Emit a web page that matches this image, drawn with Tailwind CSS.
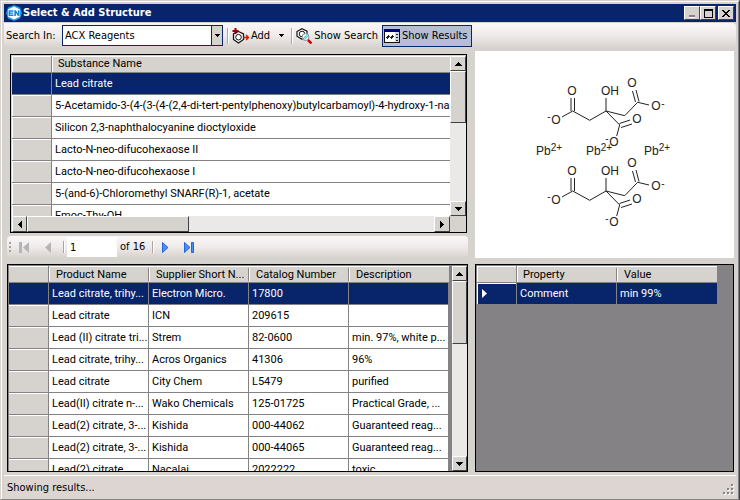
<!DOCTYPE html>
<html lang="en">
<head>
<meta charset="utf-8">
<title>Select &amp; Add Structure</title>
<script src="https://cdn.jsdelivr.net/npm/@tailwindcss/browser@4"></script>
</head>
<body class="h-screen overflow-hidden bg-[#d6d3ce] text-black text-[11px] leading-4 font-['DejaVu_Sans_Condensed',Tahoma,sans-serif]">
<svg class="hidden">
  <symbol id="up" viewBox="0 0 7 4" shape-rendering="crispEdges"><path d="M3 0h1v1h1v1h1v1h1v1H0V3h1V2h1V1h1z"/></symbol>
  <symbol id="down" viewBox="0 0 7 4" shape-rendering="crispEdges"><path d="M0 0h7v1H6v1H5v1H4v1H3V3H2V2H1V1H0z"/></symbol>
  <symbol id="left" viewBox="0 0 4 7" shape-rendering="crispEdges"><path d="M4 0v7H3V6H2V5H1V4H0V3h1V2h1V1h1V0z"/></symbol>
  <symbol id="right" viewBox="0 0 4 7" shape-rendering="crispEdges"><path d="M0 0v7h1V6h1V5h1V4h1V3H3V2H2V1H1V0z"/></symbol>
  <symbol id="citrate" viewBox="0 -12 130 88">
    <g fill="none" stroke="#222" stroke-width="1">
      <path d="M21 30L31.700 24M30 24V11M33.500 24V11M31.700 24L48.700 33.300L65 24V11M65 24L83.700 28.700L96.700 15.300M94.500 15L91.500 4M98 14.500L95 3M96.700 15.300L108 18M65 24L78.700 38M78.500 36.500L89 33M80 40.500L91 37M78.700 38L75.700 49"/>
    </g>
    <g fill="#222" font-family="Liberation Sans, Arial, sans-serif" font-size="12" text-anchor="middle">
      <text x="31" y="8">O</text><text x="15" y="37">O</text><text x="8" y="33" font-size="10">-</text>
      <text x="69" y="8">OH</text><text x="91" y="0">O</text><text x="115" y="23">O</text><text x="122" y="20" font-size="10">-</text>
      <text x="96" y="36">O</text><text x="73" y="59">O</text><text x="66" y="55" font-size="10">-</text>
    </g>
  </symbol>
</svg>
<div class="flex h-full flex-col border-t border-l border-[#d6d3ce] border-r border-b border-r-[#424142] border-b-[#848284]">
<div class="flex min-h-0 flex-1 flex-col border-t border-l border-r border-t-white border-l-white border-r-[#848284] pt-[2px] pl-[2px] pr-[2px]">

  <header class="flex h-[18px] shrink-0 items-center bg-[#08246b] pl-[2px] pr-[2px]">
    <svg width="16" height="16" viewBox="0 0 16 16" aria-hidden="true"><path d="M8 0l6 2.500L16 8l-2 5.500L8 16l-6-2.500L0 8l2-5.500z" fill="#1a9cf0"/><path d="M8 1.500l6 3v7L8 14.500 2 11.500V4.500z" fill="#fff"/><path d="M2.500 5.200h5v1.500h-3.300v.7h3v1.300h-3v.8h3.300V11h-5zM8.300 11V5.200h1.600l2 3V5.200h1.600V11h-1.600l-2-3v3z" fill="#1687dc"/></svg>
    <h1 class="flex-1 pl-px font-bold text-white">Select &amp; Add Structure</h1>
    <button aria-label="Minimize" class="flex h-[14px] w-4 justify-center border border-white border-r-[#424142] border-b-[#424142] bg-[#d6d3ce] pt-2"><span class="h-[3px] w-[6px] border-b border-white bg-[#848284]"></span></button>
    <button aria-label="Maximize" class="flex h-[14px] w-4 items-center justify-center border border-white border-r-[#424142] border-b-[#424142] bg-[#d6d3ce]"><span class="h-[9px] w-[9px] border border-t-2 border-black"></span></button>
    <button aria-label="Close" class="ml-[2px] flex h-[14px] w-4 items-center justify-center border border-white border-r-[#424142] border-b-[#424142] bg-[#d6d3ce]"><svg width="8" height="7" viewBox="0 0 8 7" shape-rendering="crispEdges"><path d="M0 0h2v1h1v1h2V1h1V0h2v1H7v1H6v1H5v1h1v1h1v1h1v1H6V6H5V5H3v1H2v1H0V6h1V5h1V4h1V3H2V2H1V1H0z"/></svg></button>
  </header>

  <nav class="mt-px flex h-[25px] shrink-0 items-center rounded-r-sm bg-linear-to-b from-[#fbf7f7] via-[#efebea] to-[#d8d2ce] pl-[2px]">
    <label for="source" class="w-14">Search In:</label>
    <div class="relative h-[21px] w-[161px]">
      <select id="source" class="h-full w-full appearance-none border border-[#08246b] bg-white pl-[2px] pr-4"><option>ACX Reagents</option></select>
      <span class="pointer-events-none absolute inset-y-px right-px flex w-[11px] items-center justify-center border-l border-[#08246b] bg-[#d6d3ce]"><svg width="5" height="3" viewBox="0 0 5 3" shape-rendering="crispEdges"><path d="M0 0h5v1H4v1H3v1H2V2H1V1H0z"/></svg></span>
    </div>
    <span class="mr-[3px] ml-1 h-4 w-[2px] border-l border-[#a6a6a6] bg-white"></span>
    <button class="flex h-[21px] items-center gap-[2px]">
      <svg width="17" height="16" viewBox="0 0 17 16"><path d="M6.500 3.500l5 2.500v5.500l-5 3.500-5-3.500V6z" fill="#fff" stroke="#111" stroke-width="1.300"/><circle cx="6.500" cy="9.200" r="2.800" fill="none" stroke="#111"/><path d="M3.500 0v6M.500 3h6" stroke="#9c0000" stroke-width="2"/><path d="M11 9.500h5M14 7l2.500 2.500L14 12" fill="none" stroke="#f00" stroke-width="1.300"/></svg>
      Add
    </button>
    <button aria-label="Add options" class="flex h-[21px] w-[21px] items-center justify-center pl-[2px]"><svg width="5" height="3" viewBox="0 0 5 3" shape-rendering="crispEdges"><path d="M0 0h5v1H4v1H3v1H2V2H1V1H0z"/></svg></button>
    <span class="mr-[3px] h-4 w-[2px] border-l border-[#a6a6a6] bg-white"></span>
    <button class="flex h-[21px] items-center gap-[2px]">
      <svg width="16" height="16" viewBox="0 0 16 16"><path d="M6 .7l5 2.500v5L6 11.200 1 8.200V3.500z" fill="#fff" stroke="#111" stroke-width="1.200"/><circle cx="6" cy="6" r="2.800" fill="none" stroke="#111"/><circle cx="9.500" cy="9" r="3.500" fill="#e8ffff" stroke="#8a8a8a"/><path d="M7 11l4-4.500M8.500 11.500l3.500-4" stroke="#00d5dc"/><path d="M12 12l3.500 3.500" stroke="#d00000" stroke-width="2.500"/></svg>
      Show Search
    </button>
    <button aria-pressed="true" class="ml-1 flex h-[22px] items-center gap-[2px] border border-[#08246b] bg-[#b5bed6] pl-px pr-[3px]">
      <svg width="16" height="14" viewBox="0 0 16 14" shape-rendering="crispEdges"><path fill="#111" d="M0 0h16v14H0z"/><path fill="#fff" d="M1 3h10v10H1z"/><path fill="#ced7e8" d="M11 3h4v10h-4z"/><path fill="#000084" d="M0 0h16v3H0z"/><path d="M2 8h1V7h1V6h1v1h1v1h1V7h1V6h1v1h1v1H9v1H8v1H7V9H6V8H5v1H4v1H3V9H2zM12 5h2v1h-2zM12 8h2v1h-2zM12 11h2v1h-2z" fill="#222"/></svg>
      Show Results
    </button>
  </nav>

  <main class="grid min-h-0 flex-1 grid-cols-[461fr_259fr] grid-rows-[210px_minmax(0,1fr)] gap-x-[7px] gap-y-[3px] pt-[3px] pr-[2px] pb-[3px] pl-[3px] font-[Roboto,'Liberation_Sans',Arial,sans-serif]">

    <section class="flex min-w-0 flex-col">
      <div class="mt-[3px] ml-[3px] mr-px grid h-[179px] grid-cols-[minmax(0,1fr)_16px] grid-rows-[minmax(0,1fr)_16px] border border-black bg-[#d6d3ce] pt-px pl-px">
        <div class="overflow-hidden bg-white">
          <table class="w-full table-fixed border-separate border-spacing-0 text-left whitespace-nowrap [&_td]:h-[22px] [&_td]:overflow-hidden [&_td]:border-b [&_td]:border-[#848284] [&_td]:p-0 [&_td]:pl-[3px] [&_th]:border-r [&_th]:border-b [&_th]:border-[#848284] [&_th]:bg-[#d6d3ce] [&_th]:p-0 [&_th]:font-normal [&_th]:shadow-[inset_1px_1px_0_#fff]">
            <thead><tr class="h-[17px]"><th class="w-10"></th><th class="border-r-0! pl-[6px]!">Substance Name</th></tr></thead>
            <tbody>
              <tr class="bg-[#08246b] text-white"><th class="bg-[#08246b]! shadow-none!"></th><td>Lead citrate</td></tr>
              <tr><th></th><td>5-Acetamido-3-(4-(3-(4-(2,4-di-tert-pentylphenoxy)butylcarbamoyl)-4-hydroxy-1-naphthyl</td></tr>
              <tr><th></th><td>Silicon 2,3-naphthalocyanine dioctyloxide</td></tr>
              <tr><th></th><td>Lacto-N-neo-difucohexaose II</td></tr>
              <tr><th></th><td>Lacto-N-neo-difucohexaose I</td></tr>
              <tr><th></th><td>5-(and-6)-Chloromethyl SNARF(R)-1, acetate</td></tr>
              <tr><th></th><td>Fmoc-Thy-OH</td></tr>
            </tbody>
          </table>
        </div>
        <div class="flex flex-col bg-[#ebe9e7]">
          <button aria-label="Scroll up" class="flex h-[15px] items-center justify-center border border-white border-r-[#424142] border-b-[#424142] bg-[#d6d3ce]"><svg width="7" height="4"><use href="#up"/></svg></button>
          <div class="h-[52px] border border-white border-r-[#424142] border-b-[#424142] bg-[#d6d3ce]"></div>
          <button aria-label="Scroll down" class="mt-auto flex h-[15px] items-center justify-center border border-white border-r-[#424142] border-b-[#424142] bg-[#d6d3ce]"><svg width="7" height="4"><use href="#down"/></svg></button>
        </div>
        <div class="flex bg-[#ebe9e7]">
          <button aria-label="Scroll left" class="flex w-[15px] items-center justify-center border border-white border-r-[#424142] border-b-[#424142] bg-[#d6d3ce]"><svg width="4" height="7"><use href="#left"/></svg></button>
          <div class="w-[162px] border border-white border-r-[#424142] border-b-[#424142] bg-[#d6d3ce]"></div>
          <button aria-label="Scroll right" class="ml-auto flex w-4 items-center justify-center border border-white border-r-[#424142] border-b-[#424142] bg-[#d6d3ce]"><svg width="4" height="7"><use href="#right"/></svg></button>
        </div>
      </div>
      <div class="mt-[3px] flex h-[22px] items-center rounded-sm bg-linear-to-b from-[#fbf7f7] via-[#efebea] to-[#d8d2ce] pl-[2px] font-['DejaVu_Sans_Condensed',Tahoma,sans-serif]">
        <span class="flex w-[9px] flex-col gap-[2px]"><i class="size-[2px] bg-[#a5a29c]"></i><i class="size-[2px] bg-[#a5a29c]"></i><i class="size-[2px] bg-[#a5a29c]"></i></span>
        <button disabled aria-label="First" class="ml-px mr-4"><svg width="10" height="11" viewBox="0 0 10 11" fill="#b5b5b8"><path d="M0 0h3v11H0zM10 0v11L4 5.500z"/></svg></button>
        <button disabled aria-label="Previous"><svg width="6" height="11" viewBox="0 0 6 11" fill="#b5b5b8"><path d="M6 0v11L0 5.500z"/></svg></button>
        <span class="ml-3 mr-[2px] h-3 w-[2px] border-l border-[#a6a6a6] bg-white"></span>
        <input aria-label="Page" value="1" class="h-5 w-[50px] bg-white px-[3px]">
        <span class="ml-[3px] w-8">of 16</span>
        <span class="h-3 w-[2px] border-l border-[#a6a6a6] bg-white"></span>
        <button aria-label="Next" class="ml-2 mr-[15px]"><svg width="7" height="11" viewBox="0 0 7 11"><path d="M.500.500v10L6 5.500z" fill="#4b8cf5" stroke="#2464db"/></svg></button>
        <button aria-label="Last"><svg width="11" height="11" viewBox="0 0 11 11"><path d="M.500.500v10L6 5.500zM7.500.500h2v10h-2z" fill="#4b8cf5" stroke="#2464db"/></svg></button>
      </div>
    </section>

    <section class="mb-[3px] bg-white" aria-label="Structure">
      <svg class="h-full w-full" viewBox="475 51 259 207">
        <use href="#citrate" x="541" y="75" width="130" height="88"/>
        <use href="#citrate" x="541" y="155" width="130" height="88"/>
        <g fill="#222" font-family="Liberation Sans, Arial, sans-serif" font-size="12">
          <text x="536" y="155">Pb<tspan dy="-4" font-size="10">2+</tspan></text>
          <text x="586" y="155">Pb<tspan dy="-4" font-size="10">2+</tspan></text>
          <text x="644" y="155">Pb<tspan dy="-4" font-size="10">2+</tspan></text>
        </g>
      </svg>
    </section>

    <section class="flex min-w-0 border border-black bg-[#848284] pt-px pl-px">
      <div class="mr-[3px] min-w-0 flex-1 overflow-hidden">
        <table class="w-full table-fixed border-separate border-spacing-0 bg-white text-left whitespace-nowrap [&_td]:h-[22px] [&_td]:overflow-hidden [&_td]:border-r [&_td]:border-b [&_td]:border-[#848284] [&_td]:p-0 [&_td]:pl-[3px] [&_th]:border-b [&_th]:border-[#848284] [&_th]:bg-[#d6d3ce] [&_th]:p-0 [&_th]:font-normal [&_th]:shadow-[inset_0_1px_0_#fff] [&_th:first-child]:border-r [&_th>div]:h-[13px] [&_th>div]:border-l [&_th>div]:border-r [&_th>div]:border-l-white [&_th>div]:border-r-[#848284] [&_th>div]:pl-[6px] [&_th>div]:leading-[13px]">
          <thead><tr class="h-[17px]"><th class="w-10"></th><th><div>Product Name</div></th><th><div>Supplier Short N...</div></th><th><div>Catalog Number</div></th><th><div class="border-r-0!">Description</div></th></tr></thead>
          <tbody>
            <tr class="bg-[#08246b] text-white"><th class="bg-[#08246b]! shadow-none!"></th><td>Lead citrate, trihy...</td><td>Electron Micro.</td><td>17800</td><td></td></tr>
            <tr><th></th><td>Lead citrate</td><td>ICN</td><td>209615</td><td></td></tr>
            <tr><th></th><td>Lead (II) citrate tri...</td><td>Strem</td><td>82-0600</td><td>min. 97%, white p...</td></tr>
            <tr><th></th><td>Lead citrate, trihy...</td><td>Acros Organics</td><td>41306</td><td>96%</td></tr>
            <tr><th></th><td>Lead citrate</td><td>City Chem</td><td>L5479</td><td>purified</td></tr>
            <tr><th></th><td>Lead(II) citrate n-...</td><td>Wako Chemicals</td><td>125-01725</td><td>Practical Grade, ...</td></tr>
            <tr><th></th><td>Lead(2) citrate, 3-...</td><td>Kishida</td><td>000-44062</td><td>Guaranteed reag...</td></tr>
            <tr><th></th><td>Lead(2) citrate, 3-...</td><td>Kishida</td><td>000-44065</td><td>Guaranteed reag...</td></tr>
            <tr><th></th><td>Lead(2) citrate</td><td>Nacalai</td><td>2022222</td><td>toxic</td></tr>
          </tbody>
        </table>
      </div>
      <div class="flex w-[15px] flex-col bg-[#ebe9e7]">
        <button aria-label="Scroll up" class="flex h-[15px] items-center justify-center border border-white border-r-[#424142] border-b-[#424142] bg-[#d6d3ce]"><svg width="7" height="4"><use href="#up"/></svg></button>
        <div class="h-[63px] border border-white border-r-[#424142] border-b-[#424142] bg-[#d6d3ce]"></div>
        <button aria-label="Scroll down" class="mt-auto flex h-[15px] items-center justify-center border border-white border-r-[#424142] border-b-[#424142] bg-[#d6d3ce]"><svg width="7" height="4"><use href="#down"/></svg></button>
      </div>
    </section>

    <section class="overflow-hidden border border-black bg-[#848284] pt-px pl-px">
      <table class="w-[240px] table-fixed border-separate border-spacing-0 text-left [&_th]:border-b [&_th]:border-[#848284] [&_th]:bg-[#d6d3ce] [&_th]:p-0 [&_th]:font-normal [&_th]:shadow-[inset_1px_1px_0_#fff] [&_th:first-child]:border-r [&_th>div]:h-[13px] [&_th>div]:pl-[6px] [&_th>div]:leading-[13px]">
        <thead><tr class="h-[17px]"><th class="w-10"></th><th class="w-[100px]"><div class="border-r border-[#848284]">Property</div></th><th class="shadow-[inset_0_1px_0_#fff]!"><div class="border-l border-white">Value</div></th></tr></thead>
        <tbody><tr class="h-[22px] bg-[#08246b] text-white"><th class="bg-[#08246b]! pl-[5px]!"><svg width="5" height="9" viewBox="0 0 5 9"><path d="M0 0v9l5-4.500z" fill="#fff"/></svg></th><td class="border-r border-b border-[#848284] p-0 pl-[3px]">Comment</td><td class="border-b border-[#848284] p-0 pl-[3px]">min 99%</td></tr></tbody>
      </table>
    </section>
  </main>

  <footer class="flex h-6 shrink-0 items-center border-t border-white bg-[#dcd5d1] pl-[3px]">
    <span class="flex-1" role="status">Showing results...</span>
    <svg class="mt-1 mr-[2px]" width="11" height="11" viewBox="0 0 11 11" shape-rendering="crispEdges"><path fill="#fff" d="M9 1h2v2H9zM5 5h2v2H5zM9 5h2v2H9zM1 9h2v2H1zM5 9h2v2H5zM9 9h2v2H9z"/><path fill="#848284" d="M8 0h2v2H8zM4 4h2v2H4zM8 4h2v2H8zM0 8h2v2H0zM4 8h2v2H4zM8 8h2v2H8z"/></svg>
  </footer>
</div>
</div>
</body>
</html>
